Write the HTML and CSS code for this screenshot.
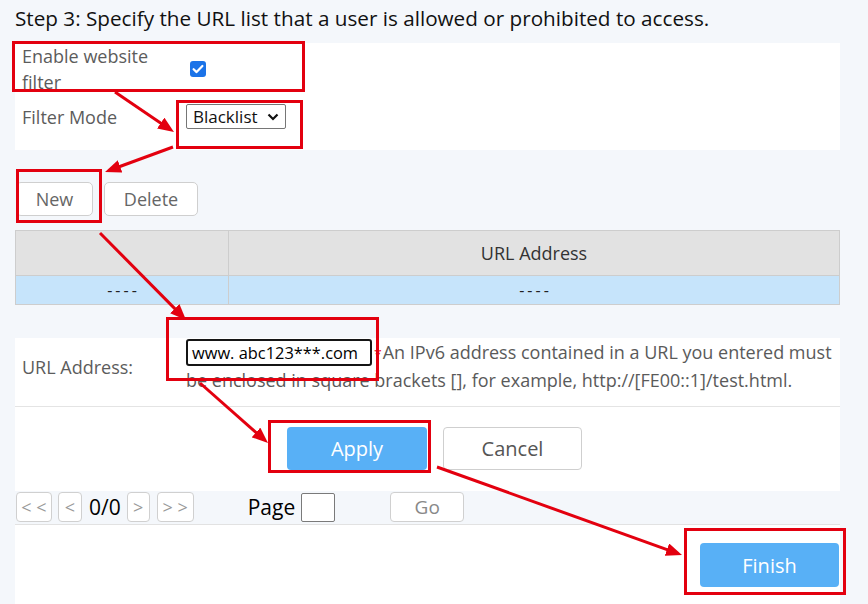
FILE: index.html
```html
<!DOCTYPE html>
<html lang="en">
<head>
<meta charset="utf-8">
<title>Website filter</title>
<link rel="stylesheet" href="styles.css">
</head>
<body>
<div class="page">
  <h1 class="title">Step 3: Specify the URL list that a user is allowed or prohibited to access.</h1>

  <div class="panel settings">
    <div class="row row-enable">
      <div class="label label-wrap">Enable website filter</div>
      <div class="value">
        <span class="checkbox"><svg viewBox="0 0 16 16" width="16" height="16"><path d="M3.6 8.2 L6.6 11.1 L12.4 5" fill="none" stroke="#fff" stroke-width="2.2" stroke-linecap="round" stroke-linejoin="round"/></svg></span>
      </div>
    </div>
    <div class="row row-mode">
      <div class="label">Filter Mode</div>
      <div class="value">
        <div class="select"><span>Blacklist</span><svg viewBox="0 0 12 8" width="12" height="8"><path d="M1.5 1.5 L6 6 L10.5 1.5" fill="none" stroke="#111" stroke-width="2.2"/></svg></div>
      </div>
    </div>
  </div>

  <div class="toolbar">
    <button class="btn btn-new">New</button>
    <button class="btn btn-delete">Delete</button>
  </div>

  <table class="list">
    <thead>
      <tr><th class="col-check"></th><th>URL Address</th></tr>
    </thead>
    <tbody>
      <tr><td>----</td><td>----</td></tr>
    </tbody>
  </table>

  <div class="panel url-panel">
    <div class="url-row">
      <div class="label">URL Address:</div>
      <div class="url-value"><span class="url-input">www. abc123***.com</span><span class="req">*</span>An IPv6 address contained in a URL you entered must be enclosed in square brackets [], for example, http://[FE00::1]/test.html.</div>
    </div>
    <div class="actions">
      <button class="btn-lg btn-primary">Apply</button>
      <button class="btn-lg btn-default">Cancel</button>
    </div>
  </div>

  <div class="pager">
    <button class="pg-btn pg-first">&lt; &lt;</button>
    <button class="pg-btn pg-prev">&lt;</button>
    <span class="pg-count">0/0</span>
    <button class="pg-btn pg-next">&gt;</button>
    <button class="pg-btn pg-last">&gt; &gt;</button>
    <span class="pg-label">Page</span>
    <span class="pg-input"></span>
    <button class="pg-btn pg-go">Go</button>
  </div>

  <div class="panel footer">
    <button class="btn-lg btn-primary btn-finish">Finish</button>
  </div>
</div>

<svg class="annotations" width="868" height="604" viewBox="0 0 868 604">
  <defs>
    <marker id="head" viewBox="0 0 16 13" refX="6" refY="6.5" markerWidth="16" markerHeight="13" markerUnits="userSpaceOnUse" orient="auto">
      <path d="M0 0 L16 6.5 L0 13 Z" fill="#e3000f"/>
    </marker>
  </defs>
  <g fill="none" stroke="#e3000f" stroke-width="3">
    <rect x="13.5" y="42.5" width="290" height="48"/>
    <rect x="177.5" y="101.5" width="124" height="46"/>
    <rect x="17.5" y="170.5" width="83" height="51"/>
    <rect x="167.5" y="318.5" width="210" height="61"/>
    <rect x="269.5" y="421.5" width="160" height="50"/>
    <rect x="685.5" y="529.5" width="159" height="64"/>
    <line x1="115" y1="92" x2="165.7" y2="126.4" marker-end="url(#head)"/>
    <line x1="173" y1="147" x2="114.4" y2="168.5" marker-end="url(#head)"/>
    <line x1="100" y1="233" x2="179" y2="312.9" marker-end="url(#head)"/>
    <line x1="200" y1="383" x2="260.5" y2="436.4" marker-end="url(#head)"/>
    <line x1="437" y1="467" x2="672.6" y2="551.6" marker-end="url(#head)"/>
  </g>
</svg>
</body>
</html>
```

FILE: styles.css
```css
* { box-sizing: border-box; }

html, body {
  margin: 0;
  padding: 0;
  background: #f4f7fb;
  font-family: "Open Sans", "Noto Sans", "Liberation Sans", sans-serif;
  font-size: 18px;
  color: #555;
  overflow: hidden;
}

.page {
  position: relative;
  padding-left: 15px;
  width: 840px;
  height: 604px;
}

.title {
  margin: 0;
  height: 43px;
  line-height: 36px;
  font-size: 20.7px;
  font-weight: normal;
  color: #111;
  white-space: nowrap;
}

.panel {
  background: #fff;
  width: 825px;
}

/* settings panel */
.settings {
  height: 107px;
}

.row {
  display: flex;
  align-items: center;
}

.row-enable { height: 52px; }
.row-mode { height: 44px; }

.label {
  width: 171px;
  flex: none;
  padding-left: 7px;
  color: #5c5c5c;
}

.label-wrap {
  padding-right: 30px;
  line-height: 26px;
}

.value {
  display: flex;
  align-items: center;
}

.checkbox {
  display: block;
  width: 16px;
  height: 16px;
  margin-left: 4px;
  border-radius: 3px;
  background: #1b73e8;
}

.checkbox svg { display: block; }

.select {
  display: flex;
  align-items: center;
  justify-content: space-between;
  width: 100px;
  height: 25px;
  padding: 0 6px 0 6px;
  border: 1px solid #767676;
  border-radius: 2px;
  color: #111;
  font-size: 17px;
  line-height: 23px;
  margin-top: -1px;
}

/* toolbar */
.toolbar {
  display: flex;
  gap: 11px;
  margin-top: 32px;
  margin-bottom: 14px;
  padding-left: 1px;
}

.btn {
  height: 34px;
  border: 1px solid #cfcfcf;
  border-radius: 5px;
  background: #fff;
  color: #666;
  font: inherit;
  font-size: 18px;
  padding: 0;
}

.btn-new { width: 77px; }
.btn-delete { width: 94px; }

/* table */
.list {
  width: 825px;
  border-collapse: collapse;
  table-layout: fixed;
}

.list th,
.list td {
  border: 1px solid #cdcdcd;
  text-align: center;
  padding: 0;
}

.list th {
  height: 45px;
  background: #e2e2e2;
  font-weight: normal;
  color: #333;
  font-size: 18px;
}

.list th.col-check { width: 213px; }

.list td {
  height: 29px;
  background: #c6e4fb;
  color: #222;
  font-size: 16px;
  letter-spacing: 3px;
  text-indent: 3px;
}

/* url panel */
.url-panel {
  margin-top: 33px;
}

.url-row {
  display: flex;
  align-items: center;
  padding: 1px 0 12px;
  border-bottom: 1px solid #e4e4e4;
}

.url-value {
  flex: 1;
  line-height: 27px;
  color: #5a5a5a;
  padding-right: 6px;
}

.url-input {
  display: inline-block;
  vertical-align: top;
  width: 186px;
  height: 27px;
  border: 2px solid #151515;
  border-radius: 3px;
  padding-left: 4px;
  line-height: 23px;
  color: #000;
  font-size: 16.4px;
}

.req {
  color: #e60012;
  font-size: 14px;
  margin: 0 1px 0 2px;
}

.actions {
  display: flex;
  gap: 16px;
  padding: 20px 0 21px 272px;
}

.btn-lg {
  height: 43px;
  border-radius: 4px;
  font: inherit;
  font-size: 20px;
  padding: 0;
}

.btn-primary {
  width: 140px;
  border: none;
  background: #58b0f6;
  color: #fff;
}

.btn-default {
  width: 139px;
  border: 1px solid #cfcfcf;
  background: #fff;
  color: #555;
}

/* pager */
.pager {
  display: flex;
  align-items: center;
  height: 34px;
  width: 825px;
  padding-bottom: 1px;
  border-bottom: 1px solid #e2e2e2;
}

.pg-btn {
  height: 30px;
  border: 1px solid #d0d0d0;
  border-radius: 4px;
  background: #fff;
  color: #999;
  font: inherit;
  font-size: 18px;
  line-height: 28px;
  padding: 0;
}

.pg-first { width: 36px; margin-left: 1px; }
.pg-prev { width: 24px; margin-left: 6px; }
.pg-count { margin-left: 7px; color: #000; font-size: 21px; }
.pg-next { width: 23px; margin-left: 6px; }
.pg-last { width: 37px; margin-left: 7px; }
.pg-label { margin-left: 54px; color: #000; font-size: 21px; }
.pg-input {
  width: 34px;
  height: 29px;
  margin-left: 6px;
  border: 1px solid #7a7a7a;
  border-radius: 2px;
  background: #fff;
}
.pg-go { width: 74px; margin-left: 55px; font-size: 19px; color: #888; }

/* footer */
.footer {
  display: flex;
  justify-content: flex-end;
  padding: 18px 1px 40px 0;
}

.btn-finish {
  width: 139px;
  height: 44px;
}

/* annotations overlay */
.annotations {
  position: absolute;
  left: 0;
  top: 0;
  pointer-events: none;
}
```
